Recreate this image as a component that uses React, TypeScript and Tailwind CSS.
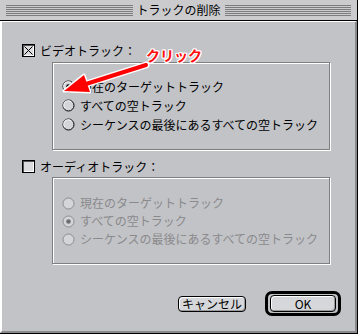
import React from "react";

const font = { fontFamily: '"Noto Sans CJK JP", "Noto Sans", sans-serif' };

function Stripes() {
  return (
    <div className="flex flex-1 flex-col gap-px">
      {[0, 1, 2, 3, 4, 5].map((i) => (
        <div key={i} className="h-px bg-[#7c7c7e]" />
      ))}
    </div>
  );
}

function Checkbox({ checked }: { checked: boolean }) {
  return (
    <div className="relative h-[13px] w-[13px] border border-black bg-[#dcdcde] shadow-[inset_1px_1px_0_#555,inset_-1px_-1px_0_#fff]">
      {checked && (
        <svg className="absolute inset-0" width="11" height="11" viewBox="0 0 11 11">
          <path d="M1.5 1.5 L9.5 9.5 M9.5 1.5 L1.5 9.5" stroke="#000" strokeWidth="1" />
        </svg>
      )}
    </div>
  );
}

function Radio({ on, disabled }: { on?: boolean; disabled?: boolean }) {
  const edge = disabled ? "#8c8c8e" : "#000";
  const dot = disabled ? "#6e6e70" : "#000";
  return (
    <svg width="13" height="13" viewBox="0 0 13 13" className="shrink-0">
      <circle cx="6.5" cy="6.5" r="5.5" fill="#d4d5d8" stroke={edge} strokeWidth="1" />
      {!disabled && (
        <path d="M3 9.5 A4.3 4.3 0 0 1 9.5 3" fill="none" stroke="#fff" strokeWidth="1" />
      )}
      {on && <circle cx="6.5" cy="6.5" r="2.3" fill={dot} />}
    </svg>
  );
}

function Group({
  rows,
  selected,
  disabled,
  rowClass,
  padClass,
}: {
  rows: string[];
  selected: number;
  disabled?: boolean;
  rowClass: string;
  padClass: string;
}) {
  return (
    <div
      className={`ml-[30px] w-[278px] border border-[#7f7f82] shadow-[inset_1px_1px_0_#fff,1px_1px_0_#fff] pl-[9px] ${padClass}`}
    >
      {rows.map((r, i) => (
        <div key={r} className={`flex items-center gap-[5px] ${rowClass}`}>
          <Radio on={i === selected} disabled={disabled} />
          <span className={`text-[12px] leading-none ${disabled ? "text-[#8a8a8c]" : "text-black"}`}>
            {r}
          </span>
        </div>
      ))}
    </div>
  );
}

export default function App() {
  const options = [
    "現在のターゲットトラック",
    "すべての空トラック",
    "シーケンスの最後にあるすべての空トラック",
  ];
  return (
    <div
      style={font}
      className="relative flex h-[334px] w-[358px] flex-col overflow-hidden border-r border-b border-black bg-[#c2c3c7] text-black"
    >
      {/* title bar */}
      <div className="flex h-[21px] items-center gap-[4px] border-b border-black bg-[#cbcbce] px-[6px]">
        <Stripes />
        <span className="text-[12px] leading-none">トラックの削除</span>
        <Stripes />
      </div>

      {/* body */}
      <div className="flex flex-1 flex-col border-t border-l-2 border-[#fff] border-r-2 border-r-[#8a8a8d] border-b-2 border-b-[#8a8a8d] pl-[20px] pt-[22px] pr-[14px]">
        <div className="flex h-[13px] items-center gap-[5px]">
          <Checkbox checked />
          <span className="text-[12px] leading-none">ビデオトラック：</span>
        </div>
        <div className="mt-[5px]">
          <Group rows={options} selected={0} rowClass="h-[19px]" padClass="h-[88px] pt-[14px]" />
        </div>

        <div className="mt-[10px] flex h-[13px] items-center gap-[5px]">
          <Checkbox checked={false} />
          <span className="text-[12px] leading-none">オーディオトラック：</span>
        </div>
        <div className="mt-[4px]">
          <Group rows={options} selected={1} disabled rowClass="h-[18px]" padClass="h-[87px] pt-[16px]" />
        </div>

        <div className="mt-[27px] flex h-[25px] items-center justify-end gap-[19px]">
          <button className="flex h-[16px] w-[68px] items-center justify-center rounded-[4px] border border-black bg-[#d6d7da] text-[12px] leading-none shadow-[inset_1px_1px_0_#fff,inset_-1px_-1px_0_#9a9a9d]">
            キャンセル
          </button>
          <div className="flex h-[25px] w-[76px] items-center justify-center rounded-[7px] border-[3px] border-black">
            <button className="flex h-[17px] w-[66px] items-center justify-center rounded-[4px] border border-black bg-[#d6d7da] text-[12px] leading-none shadow-[inset_1px_1px_0_#fff,inset_-1px_-1px_0_#9a9a9d]">
              OK
            </button>
          </div>
        </div>
      </div>

      {/* annotation */}
      <span
        className="absolute left-[146px] top-[48px] text-[14px] font-bold leading-none text-[#ff1010] [text-shadow:1px_0_0_#fff,-1px_0_0_#fff,0_1px_0_#fff,0_-1px_0_#fff,1px_1px_0_#fff,-1px_-1px_0_#fff,1px_-1px_0_#fff,-1px_1px_0_#fff]"
      >
        クリック
      </span>
      <svg className="pointer-events-none absolute left-0 top-0" width="358" height="334">
        <line x1="146" y1="65" x2="86" y2="84" stroke="#fff" strokeWidth="7" strokeLinecap="round" />
        <polygon points="64,91 90,92 84,75" fill="#fff" stroke="#fff" strokeWidth="3" strokeLinejoin="round" />
        <line x1="146" y1="65" x2="86" y2="84" stroke="#f00" strokeWidth="4" strokeLinecap="round" />
        <polygon points="64,91 90,92 84,75" fill="#f00" />
      </svg>
    </div>
  );
}
